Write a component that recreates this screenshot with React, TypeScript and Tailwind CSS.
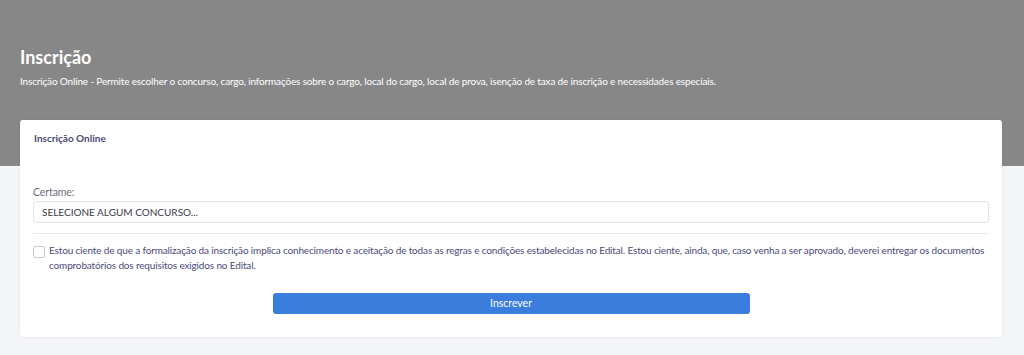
export default function App() {
  return (
    <div className="min-h-[355px] bg-[#f3f5f9] font-['Lato',sans-serif]">
      <div className="h-[166px] bg-[#878787] px-5 pt-[45px]">
        <h1 className="text-[18px] font-bold leading-[24px] text-white">Inscrição</h1>
        <p className="mt-[4px] text-[10px] leading-[16px] tracking-[-0.16px] text-white">
          Inscrição Online - Permite escolher o concurso, cargo, informações sobre o cargo, local do cargo, local de prova, isenção de taxa de inscrição e necessidades especiais.
        </p>
      </div>
      <div className="ml-5 mr-[22px] -mt-[46px] rounded-[3px] bg-white pb-[23px] shadow-[0_0_4px_rgba(0,0,0,0.06)]">
        <div className="px-[14px] pt-[11px] text-[10px] font-bold leading-[14px] text-[#4a4a72]">Inscrição Online</div>
        <div className="px-[13px] pt-[40px]">
          <label className="block text-[10.5px] leading-[15px] tracking-[-0.1px] text-[#6c6c7c]">Certame:</label>
          <div className="mt-[1px] flex h-[22px] items-center rounded-[3px] border border-[#e2e4ea] px-2 text-[10px] text-[#3a3a4a]">
            SELECIONE ALGUM CONCURSO...
          </div>
          <hr className="mt-[10px] border-t border-[#e6e8ee]" />
          <label className="mt-[9px] flex gap-[4px]">
            <input type="checkbox" className="mt-[3px] h-3 w-3 shrink-0 appearance-none rounded-[2px] border border-[#c8cad2] bg-white" />
            <span className="text-[10px] leading-[15px] tracking-[-0.15px] text-[#4a4a7a]">
              Estou ciente de que a formalização da inscrição implica conhecimento e aceitação de todas as regras e condições estabelecidas no Edital. Estou ciente, ainda, que, caso venha a ser aprovado, deverei entregar os documentos comprobatórios dos requisitos exigidos no Edital.
            </span>
          </label>
          <div className="mt-[20px] flex justify-center">
            <button className="h-[21px] w-[477px] rounded-[3px] bg-[#3a7ddd] text-[10.5px] text-white">Inscrever</button>
          </div>
        </div>
      </div>
    </div>
  );
}
